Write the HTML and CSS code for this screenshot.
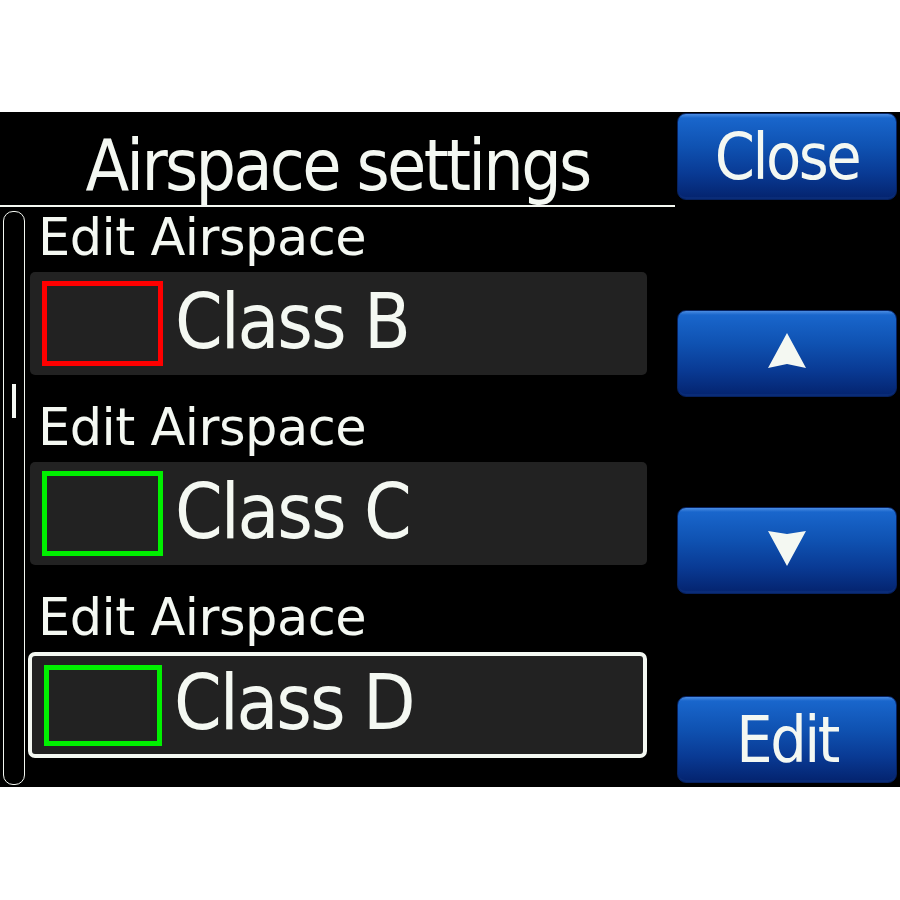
FILE: index.html
```html
<!DOCTYPE html>
<html lang="en">
<head>
    <meta charset="UTF-8">
    <meta name="viewport" content="width=device-width, initial-scale=1.0">
    <title>Airspace settings</title>
    <link rel="stylesheet" href="styles.css">
</head>
<body>
    <div class="screen">
        <div class="main">
            <div class="header">
                <h1 class="title">Airspace settings</h1>
            </div>
            <div class="content">
                <div class="scrollbar"><div class="thumb"></div></div>
                <div class="list">
                    <div class="entry">
                        <div class="caption">Edit Airspace</div>
                        <div class="item">
                            <span class="swatch red"></span>
                            <span class="name">Class B</span>
                        </div>
                    </div>
                    <div class="entry">
                        <div class="caption">Edit Airspace</div>
                        <div class="item">
                            <span class="swatch green"></span>
                            <span class="name">Class C</span>
                        </div>
                    </div>
                    <div class="entry">
                        <div class="caption">Edit Airspace</div>
                        <div class="item selected">
                            <span class="swatch green"></span>
                            <span class="name">Class D</span>
                        </div>
                    </div>
                </div>
            </div>
        </div>

        <div class="buttons">
            <button class="btn">Close</button>
            <button class="btn">
                <svg class="arrow" width="38" height="36" viewBox="0 0 38 36">
                    <polygon points="19,0 38,35 19,31 0,35" fill="#f4f8f2"/>
                </svg>
            </button>
            <button class="btn">
                <svg class="arrow" width="38" height="36" viewBox="0 0 38 36">
                    <polygon points="0,1 19,4 38,1 19,36" fill="#f4f8f2"/>
                </svg>
            </button>
            <button class="btn edit">Edit</button>
        </div>
    </div>
</body>
</html>
```

FILE: styles.css
```css
body {
    margin: 0;
    background-color: #fff;
    font-family: "DejaVu Sans", sans-serif;
}
.screen {
    margin-top: 112px;
    height: 675px;
    background-color: #000;
    color: #f4f8f2;
    display: grid;
    grid-template-columns: 675px 220px;
    column-gap: 2px;
}
.main {
    display: flex;
    flex-direction: column;
    min-height: 0;
}
.header {
    height: 93px;
    border-bottom: 2px solid #f4f8f2;
}
.title {
    margin: 0;
    padding-top: 18px;
    font-family: "DejaVu Sans Condensed", "DejaVu Sans", sans-serif;
    font-stretch: condensed;
    font-weight: normal;
    font-size: 71px;
    line-height: 71px;
    letter-spacing: -2.7px;
    text-align: center;
}
.content {
    flex: 1;
    display: flex;
    padding: 4px 0 2px 3px;
    min-height: 0;
}
.scrollbar {
    width: 22px;
    box-sizing: border-box;
    border: 1px solid #f4f8f2;
    border-radius: 10px;
}
.thumb {
    width: 4px;
    height: 34px;
    margin: 172px 0 0 8px;
    background-color: #f4f8f2;
}
.list {
    width: 617px;
    margin-left: 5px;
    padding-top: 1px;
}
.entry + .entry {
    margin-top: 27px;
}
.caption {
    margin-left: 8px;
    font-size: 51px;
    line-height: 51px;
    letter-spacing: -0.5px;
}
.item {
    height: 103px;
    margin-top: 9px;
    padding-left: 12px;
    box-sizing: border-box;
    background-color: #222;
    border-radius: 5px;
    display: flex;
    align-items: center;
}
.item.selected {
    height: 106px;
    margin-left: -2px;
    padding-left: 12px;
    border: 4px solid #f4f8f2;
    border-radius: 7px;
}
.swatch {
    width: 121px;
    height: 85px;
    box-sizing: border-box;
    border: 5px solid;
    flex-shrink: 0;
}
.selected .swatch {
    width: 118px;
    height: 81px;
}
.swatch.red {
    border-color: #ff0000;
}
.swatch.green {
    border-color: #00f000;
}
.name {
    margin-left: 12px;
    margin-bottom: 4px;
    font-family: "DejaVu Sans Condensed", "DejaVu Sans", sans-serif;
    font-stretch: condensed;
    font-size: 76px;
    line-height: 76px;
    letter-spacing: -2.1px;
}
.buttons {
    display: flex;
    flex-direction: column;
    padding: 1px 0 4px;
}
.btn {
    height: 87px;
    padding: 0;
    border: 1px solid #072260;
    border-radius: 9px;
    background: linear-gradient(to bottom, #4a8ce2 0, #1966cc 4px, #0f52b2 38%, #093a94 70%, #04236e 100%);
    box-shadow: inset 0 -2px 0 #0a2c78;
    color: #f4f8f2;
    font-family: "DejaVu Sans Condensed", "DejaVu Sans", sans-serif;
    font-stretch: condensed;
    font-size: 64px;
    letter-spacing: -2.5px;
    display: flex;
    align-items: center;
    justify-content: center;
    cursor: pointer;
}
.btn + .btn {
    margin-top: 110px;
}
.btn.edit {
    margin-top: auto;
}
.arrow {
    display: block;
    margin-bottom: 6px;
}
```
